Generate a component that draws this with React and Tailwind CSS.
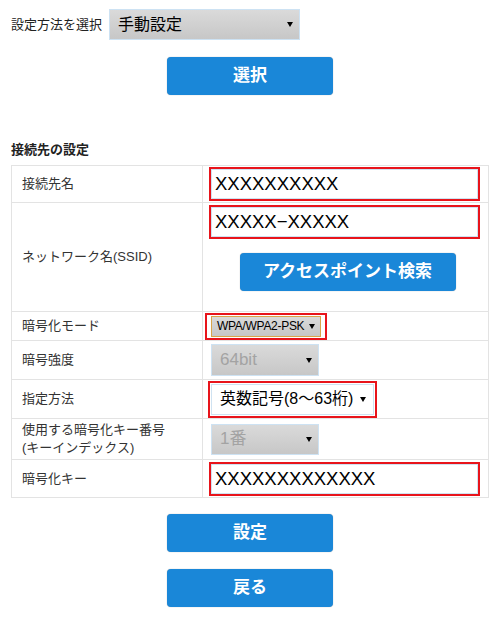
import React from "react";

const font = { fontFamily: '"Liberation Sans", "Noto Sans CJK JP", sans-serif' };

const Arrow = () => (
  <span className="ml-auto shrink-0 w-0 h-0 border-l-[3px] border-r-[3px] border-t-[5px] border-l-transparent border-r-transparent border-t-black" />
);

const BlueButton = ({ children, className = "" }) => (
  <button
    className={`h-[38px] rounded-[4px] bg-[#1a87d8] text-white font-bold text-[17px] shadow-[0_0_1px_rgba(0,0,0,0.4)] ${className}`}
  >
    {children}
  </button>
);

const RedBox = ({ children, className = "" }) => (
  <div className={`border-2 border-[#e8141b] ${className}`}>{children}</div>
);

const TextBox = ({ value }) => (
  <RedBox className="w-[271px] h-[34px]">
    <div className="h-full border border-[#cfe2f1] bg-white flex items-center pl-[3px] text-[18.5px] text-black whitespace-nowrap">
      {value}
    </div>
  </RedBox>
);

const GraySelect = ({ value, disabled, className = "" }) => (
  <div
    className={`flex items-center whitespace-nowrap border border-[#cde2f3] bg-gradient-to-b from-[#dadada] to-[#c7c7c7] ${
      disabled ? "text-[#a3a3a3]" : "text-black"
    } ${className}`}
  >
    <span>{value}</span>
    <Arrow />
  </div>
);

const Label = ({ children }) => (
  <td className="w-[191px] border border-[#e3e3e3] pl-[10px] text-[13px] leading-[18px] text-[#333] align-middle">
    {children}
  </td>
);

const Cell = ({ children, className = "" }) => (
  <td className={`border border-[#e3e3e3] ${className}`}>{children}</td>
);

export default function App() {
  return (
    <div className="w-[500px] h-[620px] bg-white px-[11px]" style={font}>
      <div className="flex items-center pt-[9px]">
        <span className="text-[13px] text-[#222] w-[98px]">設定方法を選択</span>
        <GraySelect value="手動設定" className="w-[191px] h-[31px] pl-[8px] pr-[6px] text-[16px]" />
      </div>
      <BlueButton className="mt-[17px] ml-[156px] w-[166px]">選択</BlueButton>

      <h2 className="mt-[47px] h-[16px] leading-[16px] text-[13px] font-bold text-[#222]">接続先の設定</h2>

      <table className="mt-[7px] w-[478px] table-fixed border-collapse border border-[#e3e3e3]">
        <tbody>
          <tr className="h-[37px]">
            <Label>接続先名</Label>
            <Cell className="pl-[6px]">
              <TextBox value="XXXXXXXXXX" />
            </Cell>
          </tr>
          <tr className="h-[109px]">
            <Label>ネットワーク名(SSID)</Label>
            <Cell className="pl-[6px] align-top pt-[2px]">
              <TextBox value="XXXXX−XXXXX" />
              <div className="flex justify-center mt-[14px] pr-[2px]">
                <BlueButton className="w-[216px]">アクセスポイント検索</BlueButton>
              </div>
            </Cell>
          </tr>
          <tr className="h-[29px]">
            <Label>暗号化モード</Label>
            <Cell className="pl-[2px]">
              <RedBox className="w-[122px] h-[27px] px-[4px] py-[1px]">
                <div className="h-full flex items-center whitespace-nowrap border border-[#d9a54a] bg-gradient-to-b from-[#dadada] to-[#c7c7c7] pl-[5px] pr-[5px] text-[12px] tracking-[-0.3px] text-black">
                  <span>WPA/WPA2-PSK</span>
                  <Arrow />
                </div>
              </RedBox>
            </Cell>
          </tr>
          <tr className="h-[39px]">
            <Label>暗号強度</Label>
            <Cell className="pl-[8px]">
              <GraySelect value="64bit" disabled className="w-[108px] h-[32px] pl-[8px] pr-[6px] text-[17px]" />
            </Cell>
          </tr>
          <tr className="h-[39px]">
            <Label>指定方法</Label>
            <Cell className="pl-[5px]">
              <RedBox className="w-[169px] h-[37px] p-[1px]">
                <div className="h-full flex items-center whitespace-nowrap border border-[#cfe2f1] bg-white pl-[8px] pr-[7px] text-[16px] text-black">
                  <span>英数記号(8〜63桁)</span>
                  <Arrow />
                </div>
              </RedBox>
            </Cell>
          </tr>
          <tr className="h-[41px]">
            <Label>
              使用する暗号化キー番号
              <br />
              (キーインデックス)
            </Label>
            <Cell className="pl-[8px]">
              <GraySelect value="1番" disabled className="w-[108px] h-[31px] pl-[8px] pr-[6px] text-[17px]" />
            </Cell>
          </tr>
          <tr className="h-[38px]">
            <Label>暗号化キー</Label>
            <Cell className="pl-[6px]">
              <TextBox value="XXXXXXXXXXXXX" />
            </Cell>
          </tr>
        </tbody>
      </table>

      <div className="flex flex-col items-center gap-[17px] mt-[16px]">
        <BlueButton className="w-[166px]">設定</BlueButton>
        <BlueButton className="w-[166px]">戻る</BlueButton>
      </div>
    </div>
  );
}
